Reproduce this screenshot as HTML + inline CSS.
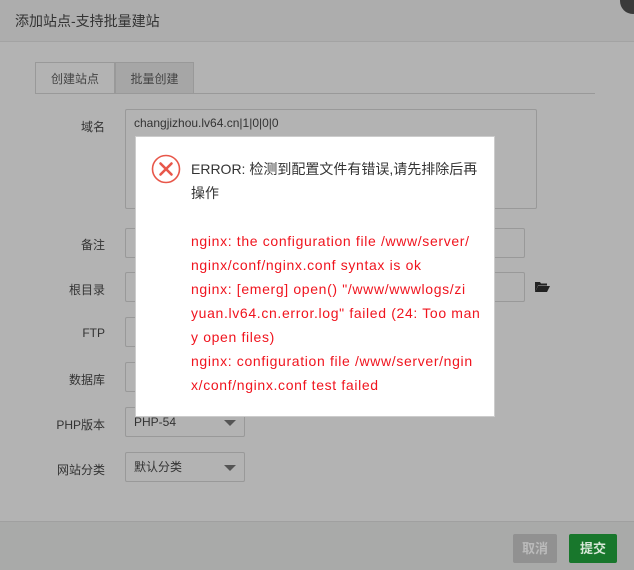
<!DOCTYPE html>
<html><head><meta charset="utf-8"><style>
*{margin:0;padding:0;box-sizing:border-box}
body{width:634px;height:570px;overflow:hidden;background:#b3b3b3;font-family:"Liberation Sans","Noto Sans CJK SC",sans-serif;font-size:12px;color:#333;position:relative}
.abs{position:absolute}
.title{left:0;top:0;width:634px;height:42px;background:#adadad;border-bottom:1px solid #a3a3a3;font-size:14px;line-height:42px;padding-left:15px;color:#333}
.close{left:620px;top:-12px;width:26px;height:26px;border-radius:50%;background:#3a3a3a}
.tab{top:62px;height:32px;line-height:32px;text-align:center;font-size:12px;border:1px solid #999;border-bottom:none;color:#444}
.line{left:35px;top:93px;width:560px;height:1px;background:#999}
.lbl{left:40px;width:65px;text-align:right;font-size:12px;color:#333}
.inp{left:125px;border:1px solid #999;border-radius:2px;height:30px}
.sel{left:125px;width:120px;height:30px;border:1px solid #999;border-radius:2px;line-height:28px;padding-left:8px;font-size:12px;color:#333}
.sel:after{content:"";position:absolute;right:8px;top:12px;border-left:6px solid transparent;border-right:6px solid transparent;border-top:6px solid #555}
.foot{left:0;top:521px;width:634px;height:49px;background:#a9aaa9;border-top:1px solid #a0a0a0}
.btn{top:534px;height:29px;line-height:29px;text-align:center;font-weight:bold;font-size:13px;border-radius:2px}
.dlg{left:135px;top:136px;width:360px;height:281px;background:#fff;border:1px solid #ccc}
.t{position:absolute;left:55px;font-size:14px;line-height:24px;white-space:nowrap}
</style></head><body>
<div class="abs title">添加站点-支持批量建站</div>
<div class="abs close"></div>
<div class="abs tab" style="left:35px;width:80px;">创建站点</div>
<div class="abs tab" style="left:115px;width:79px;background:#a6a6a6">批量创建</div>
<div class="abs line"></div>
<div class="abs lbl" style="top:118px">域名</div>
<div class="abs inp" style="top:109px;width:412px;height:100px;padding:6px 8px;font-size:12px">changjizhou.lv64.cn|1|0|0|0</div>
<div class="abs lbl" style="top:236px">备注</div>
<div class="abs inp" style="top:228px;width:400px"></div>
<div class="abs lbl" style="top:281px">根目录</div>
<div class="abs inp" style="top:272px;width:400px"></div>
<svg class="abs" style="left:534px;top:281px" width="16" height="12" viewBox="0 0 16 12"><path d="M1 1h5l1 1.5h6v2H4L1 11z" fill="#222"/><path d="M4 5h12l-3 6H1z" fill="#222"/></svg>
<div class="abs lbl" style="top:326px">FTP</div>
<div class="abs inp" style="top:317px;width:120px"></div>
<div class="abs lbl" style="top:371px">数据库</div>
<div class="abs inp" style="top:362px;width:120px"></div>
<div class="abs lbl" style="top:416px">PHP版本</div>
<div class="abs sel" style="top:407px">PHP-54</div>
<div class="abs lbl" style="top:461px">网站分类</div>
<div class="abs sel" style="top:452px">默认分类</div>
<div class="abs foot"></div>
<div class="abs btn" style="left:513px;width:44px;background:#919191;color:#bbb">取消</div>
<div class="abs btn" style="left:569px;width:48px;background:#18772c;color:#d8e8d8">提交</div>
<div class="abs dlg">
<svg style="position:absolute;left:15px;top:17px" width="30" height="30" viewBox="0 0 30 30"><circle cx="15" cy="15" r="13.5" fill="none" stroke="#e8574a" stroke-width="1.6"/><path d="M9.5 9.5l11 11M20.5 9.5l-11 11" stroke="#e8574a" stroke-width="2.6" stroke-linecap="round"/></svg>
<div class="t" style="top:20px;color:#333;">ERROR: 检测到配置文件有错误,请先排除后再<br>操作</div>
<div class="t" style="top:92px;color:#f0141e;letter-spacing:0.65px">nginx: the configuration file /www/server/<br>nginx/conf/nginx.conf syntax is ok<br>nginx: [emerg] open() "/www/wwwlogs/zi<br>yuan.lv64.cn.error.log" failed (24: Too man<br>y open files)<br>nginx: configuration file /www/server/ngin<br>x/conf/nginx.conf test failed</div>
</div>
</body></html>
